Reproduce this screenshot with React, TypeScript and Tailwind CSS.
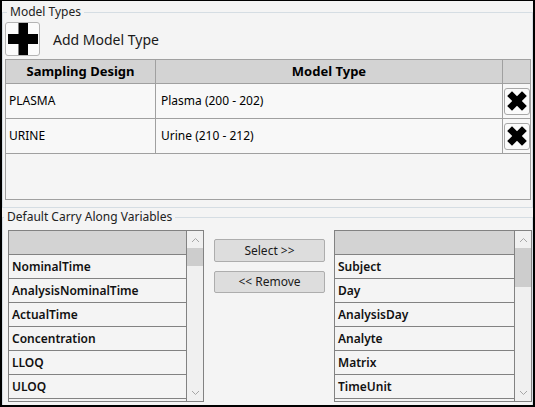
import React from 'react'

const modelRows = [
  { design: 'PLASMA', type: 'Plasma (200 - 202)' },
  { design: 'URINE', type: 'Urine (210 - 212)' },
]

const available = ['NominalTime', 'AnalysisNominalTime', 'ActualTime', 'Concentration', 'LLOQ', 'ULOQ']
const selected = ['Subject', 'Day', 'AnalysisDay', 'Analyte', 'Matrix', 'TimeUnit']

function PlusIcon() {
  return (
    <svg width="30" height="32" viewBox="0 0 30 32">
      <rect x="10.5" y="0" width="9.5" height="32" fill="#000" />
      <rect x="0" y="11" width="30" height="10" fill="#000" />
    </svg>
  )
}

function XIcon() {
  return (
    <svg width="20" height="20" viewBox="0 0 20 20">
      <rect x="6.6" y="-0.5" width="6.8" height="21" fill="#000" transform="rotate(45 10 10)" />
      <rect x="6.6" y="-0.5" width="6.8" height="21" fill="#000" transform="rotate(-45 10 10)" />
    </svg>
  )
}

function Chevron({ up }: { up?: boolean }) {
  return (
    <svg width="9" height="6" viewBox="0 0 9 6">
      <path d={up ? 'M1 5 L4.5 1.5 L8 5' : 'M1 1 L4.5 4.5 L8 1'} fill="none" stroke="#a6a6a6" strokeWidth="1" />
    </svg>
  )
}

function ListBox({ items, width, thumbHeight }: { items: string[]; width: string; thumbHeight: string }) {
  return (
    <div className={`${width} h-[172px] border border-[#828282] flex overflow-hidden bg-[#f4f4f4]`}>
      <div className="flex-1 flex flex-col overflow-hidden">
        <div className="h-[24px] flex-shrink-0 bg-[#d3d3d3] border-b border-[#828282]" />
        {items.map((it) => (
          <div key={it} className="h-[24px] flex-shrink-0 border-b border-[#828282] flex items-center pl-[3px] text-[12px] font-semibold text-[#111]">
            {it}
          </div>
        ))}
        <div className="h-[24px] flex-shrink-0" />
      </div>
      <div className="w-[17px] flex-shrink-0 border-l border-[#828282] bg-[#f0f0f0] flex flex-col items-center">
        <div className="h-[17px] flex items-center justify-center"><Chevron up /></div>
        <div className={`w-[16px] ${thumbHeight} bg-[#cdcdcd]`} />
        <div className="flex-1" />
        <div className="h-[17px] flex items-center justify-center"><Chevron /></div>
      </div>
    </div>
  )
}

export default function App() {
  return (
    <div className="w-[535px] h-[407px] overflow-hidden bg-[#f4f4f4] border-t border-l-2 border-r-2 border-b-2 border-black flex flex-col font-['Noto_Sans',sans-serif] text-[#000]">
      <fieldset className="mt-[3px] border border-[#d5dde3] pl-[2px] pr-[1px] pt-[2px] pb-[7px] min-w-0">
        <legend className="ml-[2px] px-[3px] text-[12px] leading-[16px] text-[#222]">Model Types</legend>
        <div className="flex items-center gap-[13px]">
          <button className="w-[35px] h-[34px] border border-[#b4b4b4] rounded-[3px] bg-[#fbfbfb] flex items-center justify-center">
            <PlusIcon />
          </button>
          <span className="text-[14px] text-[#1a1a1a]">Add Model Type</span>
        </div>
        <div className="mt-[3px] h-[141px] border border-[#a0a0a0] bg-[#f5f5f5] flex flex-col">
          <div className="grid grid-cols-[150px_347px_1fr] h-[24px] bg-[#d3d3d3] border-b border-[#a0a0a0] text-[13px] font-bold">
            <div className="border-r border-[#a0a0a0] flex items-center justify-center">Sampling Design</div>
            <div className="border-r border-[#a0a0a0] flex items-center justify-center">Model Type</div>
            <div />
          </div>
          {modelRows.map((r) => (
            <div key={r.design} className="grid grid-cols-[150px_347px_1fr] h-[35px] border-b border-[#a0a0a0] text-[12px] bg-[#f8f8f8]">
              <div className="border-r border-[#a0a0a0] flex items-center pl-[3px]">{r.design}</div>
              <div className="border-r border-[#a0a0a0] flex items-center pl-[5px]">{r.type}</div>
              <div className="flex items-center justify-center">
                <button className="w-[26px] h-[27px] border border-[#a8a8a8] rounded-[3px] bg-[#fbfbfb] flex items-center justify-center">
                  <XIcon />
                </button>
              </div>
            </div>
          ))}
        </div>
      </fieldset>

      <fieldset className="mt-[1px] border border-[#d5dde3] pl-[5px] pr-0 pt-[5px] pb-[4px] min-w-0">
        <legend className="-ml-[4px] px-[3px] text-[12px] leading-[16px] text-[#222]">Default Carry Along Variables</legend>
        <div className="flex">
          <ListBox items={available} width="w-[196px]" thumbHeight="h-[18px]" />
          <div className="ml-[10px] mt-[9px] w-[111px] flex flex-col gap-[9px]">
            <button className="h-[23px] border border-[#adadad] rounded-[2px] bg-[#dddddd] text-[12px] text-[#1a1a1a]">Select &gt;&gt;</button>
            <button className="h-[22px] border border-[#adadad] rounded-[2px] bg-[#dddddd] text-[12px] text-[#1a1a1a]">&lt;&lt; Remove</button>
          </div>
          <div className="ml-[9px]">
            <ListBox items={selected} width="w-[198px]" thumbHeight="h-[39px]" />
          </div>
        </div>
      </fieldset>
    </div>
  )
}
